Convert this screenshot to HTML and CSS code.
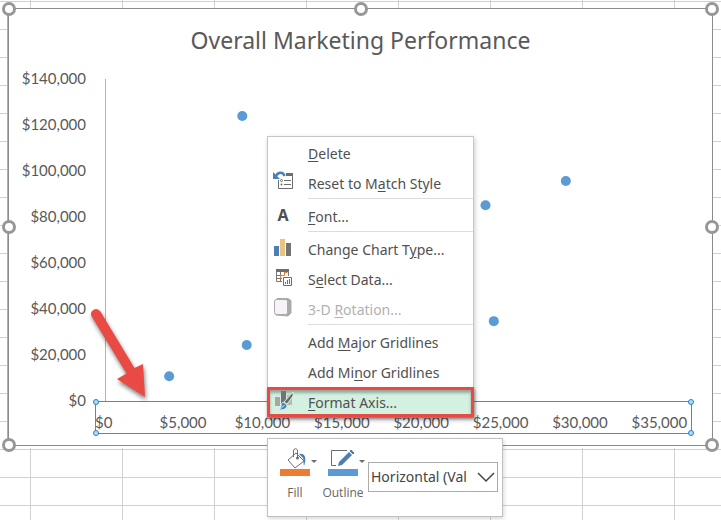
FILE: index.html
```html
<!DOCTYPE html>
<html lang="en">
<head>
    <meta charset="UTF-8">
    <meta name="viewport" content="width=device-width, initial-scale=1.0">
    <title>Overall Marketing Performance</title>
    <link rel="stylesheet" href="styles.css">
</head>
<body>
    <main class="sheet">
        <section class="chart">
            <h1>Overall Marketing Performance</h1>
            <div class="chart-body">
                <ul class="y-axis">
                    <li>$140,000</li>
                    <li>$120,000</li>
                    <li>$100,000</li>
                    <li>$80,000</li>
                    <li>$60,000</li>
                    <li>$40,000</li>
                    <li>$20,000</li>
                    <li>$0</li>
                </ul>
                <div class="plot-area">
                    <svg class="plot" role="img" aria-label="Scatter plot">
                        <circle cx="24.6%" cy="11.5%" r="5"/>
                        <circle cx="83%" cy="31.7%" r="5"/>
                        <circle cx="68.5%" cy="39.2%" r="5"/>
                        <circle cx="70%" cy="75.2%" r="5"/>
                        <circle cx="25.4%" cy="82.6%" r="5"/>
                        <circle cx="11.4%" cy="92.3%" r="5"/>
                    </svg>
                    <div class="x-axis">
                        <ul>
                            <li>$0</li>
                            <li>$5,000</li>
                            <li>$10,000</li>
                            <li>$15,000</li>
                            <li>$20,000</li>
                            <li>$25,000</li>
                            <li>$30,000</li>
                            <li>$35,000</li>
                        </ul>
                        <div class="selection">
                            <i class="dot top left"></i>
                            <i class="dot top right"></i>
                            <i class="dot bottom left"></i>
                            <i class="dot bottom right"></i>
                        </div>
                    </div>
                </div>
            </div>

            <i class="handle top left"></i>
            <i class="handle top center"></i>
            <i class="handle top right"></i>
            <i class="handle middle left"></i>
            <i class="handle middle right"></i>
            <i class="handle bottom left"></i>
            <i class="handle bottom right"></i>
        </section>

        <svg class="arrow" width="80" height="110" viewBox="0 0 80 110" aria-hidden="true">
            <path d="M11.700 11.500A5 5 0 0 1 20.400 11.500L54.500 68L63 64L65 97L37 79L46.500 73.500L11.900 16.800A5 5 0 0 1 11.700 11.500Z" fill="#e94b44"/>
        </svg>

        <div class="popups">
            <ul class="menu">
                <li><button><span class="icon"></span><span><u>D</u>elete</span></button></li>
                <li><button>
                    <svg class="icon" viewBox="0 0 22 24">
                        <path d="M13 2h7v3h-7z" fill="#6d6d6d"/>
                        <path d="M5.500 9v8.500h14V4" fill="none" stroke="#6d6d6d"/>
                        <path d="M11 9.500h7M11 13.500h7" stroke="#6d6d6d"/>
                        <circle cx="8.500" cy="9.500" r="1" fill="none" stroke="#6d6d6d"/>
                        <circle cx="8.500" cy="13.500" r="1" fill="#6d6d6d"/>
                        <path d="M3 5C5 1 10 .5 11.500 5" fill="none" stroke="#4a7ebb" stroke-width="2.500"/>
                        <path d="M0 1v7h7z" fill="#4a7ebb"/>
                    </svg>
                    <span>Reset to M<u>a</u>tch Style</span></button></li>
                <li class="line"></li>
                <li><button><b class="icon letter">A</b><span><u>F</u>ont...</span></button></li>
                <li class="line"></li>
                <li><button>
                    <svg class="icon" viewBox="0 0 22 24">
                        <path d="M1 9h5v10H1z" fill="#4a7eb5"/>
                        <path d="M7 2h5v17H7z" fill="#e8c382"/>
                        <path d="M13 6h5v13h-5z" fill="#737373"/>
                    </svg>
                    <span>Change Chart T<u>y</u>pe...</span></button></li>
                <li><button>
                    <svg class="icon" viewBox="0 0 22 24">
                        <path d="M3 2h13v3H3z" fill="#6d6d6d"/>
                        <path d="M3.500 4v10.500H9M15.500 4v5M4 8.500h5M4 11.500h5M7.500 5v9M11.500 5v3" fill="none" stroke="#777"/>
                        <path d="M7.500 11.500v-3h4v-3h3" fill="none" stroke="#ed7d31"/>
                        <path d="M10.500 10.500h8v8h-8z" fill="#fff" stroke="#6d6d6d"/>
                        <path d="M12.500 15v2M14.500 13v4M16.500 12v5" stroke="#6d6d6d"/>
                    </svg>
                    <span>S<u>e</u>lect Data...</span></button></li>
                <li><button disabled>
                    <svg class="icon" viewBox="0 0 22 24">
                        <path d="M4 1.500h11l3 2v12.500l-3 3-12-1z" fill="#aaa" stroke="#aaa" stroke-linejoin="round"/>
                        <rect x="1.500" y="2.500" width="13" height="15" rx="2" fill="#f6f2f8" stroke="#aaa"/>
                    </svg>
                    <span>3-D <u>R</u>otation...</span></button></li>
                <li class="line"></li>
                <li><button><span class="icon"></span><span>Add <u>M</u>ajor Gridlines</span></button></li>
                <li><button><span class="icon"></span><span>Add Mi<u>n</u>or Gridlines</span></button></li>
                <li><button class="active">
                    <svg class="icon" viewBox="0 0 22 24">
                        <path d="M2 7h5v9H2z" fill="#a6a6a6"/>
                        <path d="M8 1h5v13H8z" fill="#737373"/>
                        <path d="M14 5h5v10h-5z" fill="#b3b9b6"/>
                        <path d="M20 2v4l-6 8-3-2z" fill="#666" stroke="#d3f0e0"/>
                        <path d="M10 12l4 3c0 4-4 5-8 5 2-1 2-2 2-4 0-2 1-3 2-4z" fill="#3f7dbd" stroke="#d3f0e0"/>
                        <path d="M9 17c1 0 2-1 2-2" fill="none" stroke="#fff"/>
                    </svg>
                    <span><u>F</u>ormat Axis...</span></button></li>
            </ul>

            <div class="toolbar">
                <button class="tool">
                    <svg width="48" height="30" viewBox="0 0 48 30">
                        <path d="M25 6l8 8-9 7-7-8z" fill="#fff" stroke="#6d6d6d"/>
                        <path d="M22.500 10V4c0-3 4-3 4 0v7" fill="none" stroke="#6d6d6d"/>
                        <circle cx="26.500" cy="11" r="1.500" fill="#6d6d6d"/>
                        <path d="M28 7c6-1 8 4 5 12-1-3 0-6-1-8z" fill="#4a7eb5"/>
                        <path d="M9 22h30v7H9z" fill="#ed7d31"/>
                        <path d="M40 13h6l-3 3z" fill="#6d6d6d"/>
                    </svg>
                    Fill
                </button>
                <button class="tool">
                    <svg width="48" height="30" viewBox="0 0 48 30">
                        <path d="M28 3.500H12.500v15H17" fill="none" stroke="#6d6d6d"/>
                        <path d="M30 5l3 3-10 10-4 1 1-4z" fill="#4a7eb5"/>
                        <path d="M31 4l1-1 3 3-1 1z" fill="#4a7eb5" stroke="#4a7eb5"/>
                        <path d="M9 22h30v7H9z" fill="#5b9bd5"/>
                        <path d="M40 13h6l-3 3z" fill="#6d6d6d"/>
                    </svg>
                    Outline
                </button>
                <div class="picker">
                    <select aria-label="Chart element">
                        <option>Horizontal (Val</option>
                    </select>
                    <svg width="18" height="12" viewBox="0 0 18 12" aria-hidden="true">
                        <path d="M1 1l8 8 8-8" fill="none" stroke="#444" stroke-width="1.500"/>
                    </svg>
                </div>
            </div>
        </div>
    </main>
</body>
</html>
```
FILE: styles.css
```css
* {
    box-sizing: border-box;
}
body {
    margin: 0;
    font-family: "Noto Sans", sans-serif;
    color: #505050;
}
ul {
    list-style: none;
    margin: 0;
    padding: 0;
}

/* worksheet cells */
.sheet {
    position: relative;
    min-height: 100vh;
    padding: 8px;
    overflow: hidden;
    background-color: #fff;
    background-image:
        linear-gradient(to right, #d0d0d0 1px, transparent 1px),
        linear-gradient(to bottom, #d0d0d0 1px, transparent 1px);
    background-size: 92px 28px;
    background-position: 30px 1px;
}

/* chart */
.chart {
    position: relative;
    padding: 17px 52px 13px 0;
    background: #fff;
    border: 1px solid #8c8c8c;
    box-shadow: 0 2px 0 #fff, -1px 0 0 #b0b0b0;
    font-family: Lato, sans-serif;
    color: #595959;
}
h1 {
    margin: 0 -52px 0 0;
    font-family: "Noto Sans", sans-serif;
    font-size: 23px;
    font-weight: 400;
    line-height: 29px;
    text-align: center;
}
.chart-body {
    display: flex;
    gap: 19px;
    font-size: 15px;
}
.y-axis {
    width: 77px;
    text-align: right;
    line-height: 46px;
}
.plot-area {
    flex: 1;
    padding-top: 24px;
}
.plot {
    display: block;
    width: 100%;
    height: 322px;
    overflow: visible;
    border-left: 1px solid #b3b3b3;
    fill: #5b9bd5;
}
.x-axis {
    position: relative;
    padding-top: 11px;
}
.x-axis ul {
    display: grid;
    grid-template-columns: repeat(8, 1fr);
    margin: 0 -39px 0 -41px;
    text-align: center;
    line-height: 20px;
}
.selection {
    position: absolute;
    inset: 0 -32px -2px -10px;
    border: 1px solid #7f7f7f;
}

/* grab handles */
.handle,
.dot {
    position: absolute;
    border-radius: 50%;
    transform: translate(-50%, -50%);
}
.handle {
    width: 14px;
    height: 14px;
    background: #fff;
    border: 3px solid #979797;
}
.dot {
    width: 6px;
    height: 6px;
    background: #b5d9f3;
    border: 1px solid #1e82d2;
}
.top { top: 0; }
.middle { top: 50%; }
.bottom { top: 100%; }
.left { left: 0; }
.center { left: 50%; }
.right { left: 100%; }

.arrow {
    position: absolute;
    left: 80px;
    top: 300px;
    filter: drop-shadow(1px 3px 2px rgba(0, 0, 0, 0.5));
}

/* context menu and mini toolbar */
.popups {
    position: absolute;
    left: 267px;
    top: 136px;
    display: flex;
    flex-direction: column;
    align-items: flex-start;
    gap: 20px;
}
.menu {
    width: 207px;
    padding-top: 1px;
    background: #fff;
    border: 1px solid #c6c6c6;
    box-shadow: 1px 2px 5px rgba(0, 0, 0, 0.2);
}
.menu button {
    display: flex;
    align-items: center;
    gap: 13px;
    width: 100%;
    height: 30px;
    padding: 0 0 0 5px;
    border: none;
    background: none;
    font: 14px "Noto Sans", sans-serif;
    color: #505050;
    white-space: nowrap;
}
.menu button:disabled {
    color: #b1b1b1;
}
.menu u {
    text-underline-offset: 2px;
}
.menu .active {
    width: 207px;
    margin-left: -1px;
    padding-left: 3px;
    background: #d3f0e0;
    border: 3px solid #e94b44;
    box-shadow: inset 0 3px 3px rgba(0, 0, 0, 0.3), 1px 2px 3px rgba(0, 0, 0, 0.4);
}
.icon {
    flex: none;
    width: 22px;
    height: 24px;
}
.letter {
    padding-right: 2px;
    font-size: 16px;
    line-height: 22px;
}
.line {
    height: 3px;
    margin-left: 40px;
    border-top: 1px solid #dcdcdc;
}
.toolbar {
    display: flex;
    align-items: flex-start;
    width: 236px;
    height: 79px;
    padding: 8px 3px;
    background: #fff;
    border: 1px solid #c0c0c0;
    box-shadow: 1px 2px 4px rgba(0, 0, 0, 0.15);
}
.tool {
    display: flex;
    flex-direction: column;
    align-items: center;
    gap: 7px;
    width: 48px;
    padding: 0;
    border: none;
    background: none;
    font: 12px/18px "Open Sans", sans-serif;
    color: #666;
}
.picker {
    position: relative;
    margin: 15px 0 0 1px;
}
.picker svg {
    position: absolute;
    right: 3px;
    top: 10px;
    pointer-events: none;
}
select {
    appearance: none;
    width: 130px;
    height: 30px;
    padding: 0 20px 2px 2px;
    border: 1px solid #ababab;
    border-radius: 0;
    background: #fff;
    font: 14px "Noto Sans", sans-serif;
    color: #444;
}
```
